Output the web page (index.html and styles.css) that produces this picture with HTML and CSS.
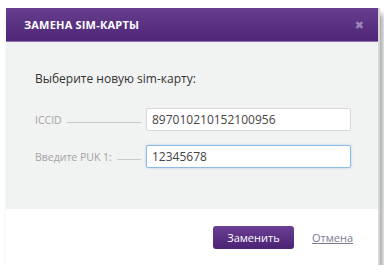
FILE: index.html
```html
<!DOCTYPE html>
<html lang="ru">
<head>
  <meta charset="UTF-8">
  <title>Замена SIM-карты</title>
  <link rel="stylesheet" href="styles.css">
</head>
<body>
<div class="dialog">
  <div class="dialog-header">
    <span class="dialog-title">ЗАМЕНА SIM-КАРТЫ</span>
    <span class="dialog-close">&#x2716;</span>
  </div>

  <div class="dialog-body">
    <p class="prompt">Выберите новую sim-карту:</p>
    <div class="field">
      <label class="field-label">ICCID</label>
      <span class="field-line"></span>
      <input class="field-input" type="text" value="897010210152100956">
    </div>
    <div class="field">
      <label class="field-label">Введите PUK 1:</label>
      <span class="field-line"></span>
      <input class="field-input focused" type="text" value="12345678">
    </div>
  </div>

  <div class="dialog-footer">
    <button class="btn-primary">Заменить</button>
    <a class="link-cancel" href="#">Отмена</a>
  </div>
</div>
</body>
</html>
```

FILE: styles.css
```css
* {
  box-sizing: border-box;
  margin: 0;
  padding: 0;
}

body {
  background: #fff;
  font-family: "Open Sans", "DejaVu Sans", sans-serif;
  padding: 8px 4px 0 6px;
}

.dialog {
  width: 374px;
  border-right: 2px solid #d6d6d6;
  box-shadow: 3px 6px 5px rgba(0, 0, 0, 0.35);
}

/* Шапка */
.dialog-header {
  height: 34px;
  display: flex;
  align-items: center;
  justify-content: space-between;
  padding: 0 14px 0 18px;
  background: linear-gradient(#673d8e, #4f2777);
  border-bottom: 1px solid #8e73ad;
}

.dialog-title {
  color: #fff;
  font-size: 11px;
  font-weight: bold;
  letter-spacing: 0.2px;
}

.dialog-close {
  color: #9c86b8;
  font-size: 11px;
}

/* Содержимое */
.dialog-body {
  height: 167px;
  background: #f1f2f2;
  padding: 28px 27px 0 29px;
}

.prompt {
  font-size: 12px;
  color: #333;
  margin-bottom: 21px;
}

.field {
  display: flex;
  align-items: center;
  height: 23px;
  margin-bottom: 14px;
}

.field-label {
  font-size: 10.5px;
  color: #a3a3a3;
  white-space: nowrap;
}

.field-line {
  flex: 1;
  height: 1px;
  background: #c8c8c8;
  margin: 5px 5px 0 5px;
}

.field-input {
  width: 205px;
  height: 23px;
  border: 1px solid #d8d8d8;
  border-radius: 2px;
  background: #fff;
  padding: 0 5px;
  font-family: "Open Sans", "DejaVu Sans", sans-serif;
  font-size: 12px;
  color: #444;
  outline: none;
}

.field-input.focused {
  border-color: #8cbbe6;
  box-shadow: 0 0 2px rgba(100, 160, 220, 0.5);
}

/* Подвал */
.dialog-footer {
  height: 56px;
  background: #fff;
  display: flex;
  align-items: center;
  justify-content: flex-end;
  padding: 0 25px 0 0;
  gap: 18px;
}

.btn-primary {
  width: 81px;
  height: 23px;
  border: none;
  border-radius: 3px;
  background: linear-gradient(#6b3f93, #4b2373);
  color: #fff;
  font-family: "Open Sans", "DejaVu Sans", sans-serif;
  font-size: 11px;
  cursor: pointer;
}

.link-cancel {
  color: #7d7898;
  font-size: 11px;
  text-decoration: underline;
}
```
